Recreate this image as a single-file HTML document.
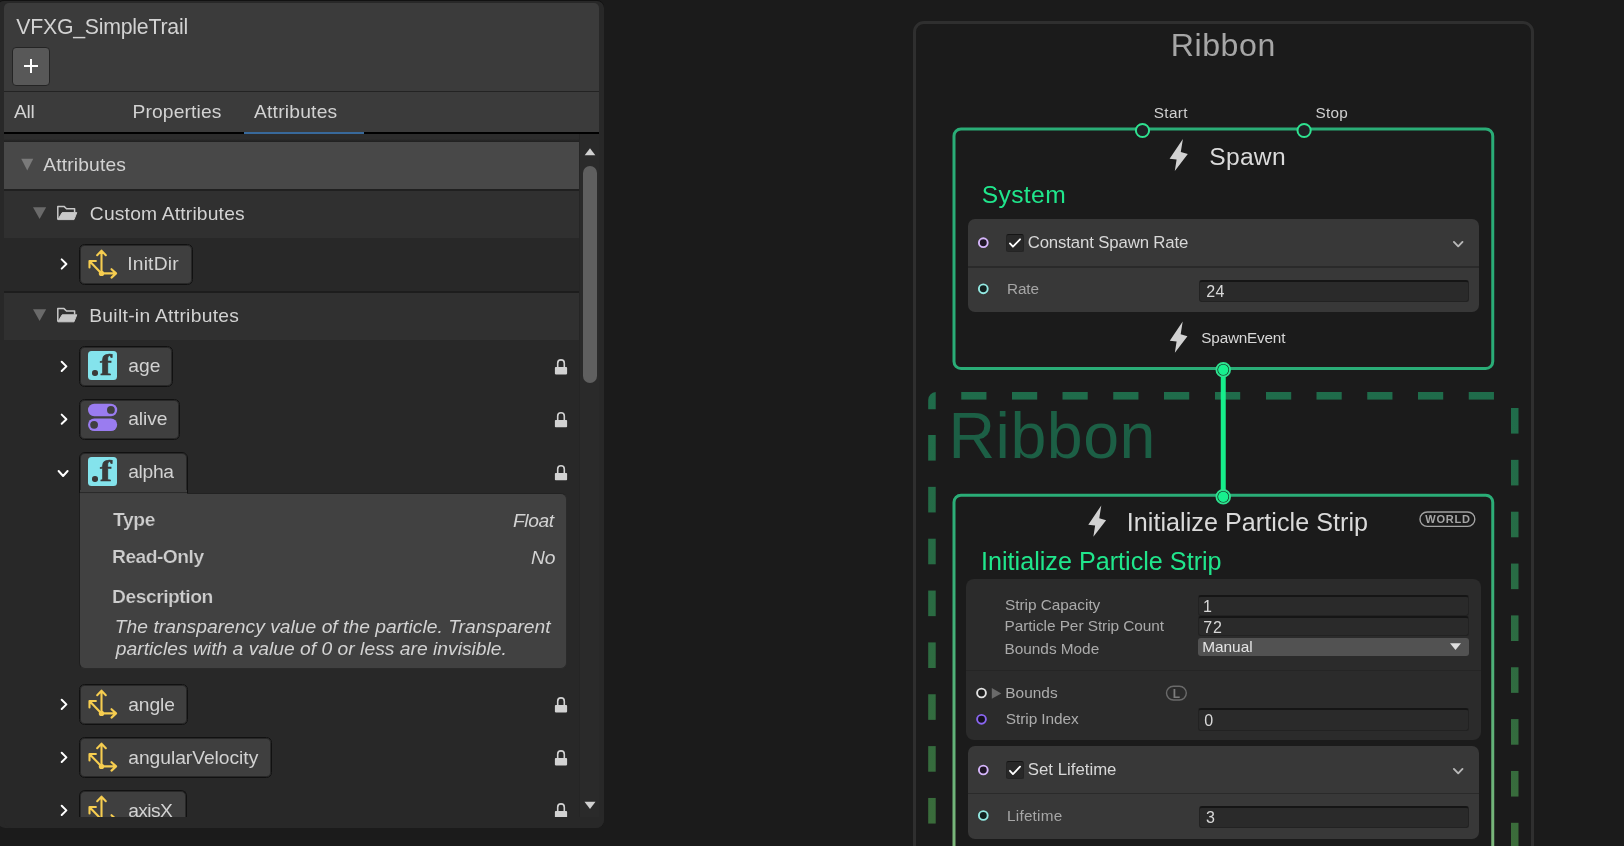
<!DOCTYPE html>
<html lang="en">
<head>
<meta charset="utf-8">
<title>VFXG_SimpleTrail</title>
<style>
html,body{margin:0;padding:0;}
body{width:1624px;height:846px;overflow:hidden;background:#1b1b1b;position:relative;font-family:"Liberation Sans",sans-serif;}
.a{position:absolute;}
.t{position:absolute;white-space:nowrap;font-family:"Liberation Sans",sans-serif;}
.pill{position:absolute;box-sizing:border-box;background:#3f3f3f;border:1px solid #111;box-shadow:inset 0 0 0 1px rgba(17,17,17,0.5);border-radius:5.5px;}
svg{position:absolute;left:0;top:0;overflow:visible;}
.fld{position:absolute;box-sizing:border-box;background:#2a2a2a;border:1px solid #222;border-top:2px solid #151515;border-radius:3px;}
.ficon{position:absolute;will-change:transform;width:29.2px;height:29.2px;background:#84e3ec;border-radius:3.5px;}
.ficon b{position:absolute;left:11.9px;top:-3.7px;font-family:"Liberation Serif",serif;font-weight:bold;font-size:29px;line-height:36px;color:#3a3a3a;-webkit-text-stroke:0.7px #3a3a3a;transform:scaleX(1.22);transform-origin:0 0;}
.ficon i{position:absolute;left:4px;top:19px;width:5.6px;height:5.6px;border-radius:50%;background:#3a3a3a;}
</style>
</head>
<body>
<!-- ================= LEFT PANEL ================= -->
<div class="a" style="left:-3px;top:0;width:607px;height:828px;background:#121212;border-radius:7px 7px 8px 8px;"></div>
<div class="a" style="left:-3px;top:1.2px;width:607px;height:826.8px;background:#282828;border-radius:7px 7px 8px 8px;"></div>
<div class="a" style="left:4px;top:3px;width:595px;height:131px;background:#3b3b3b;border-radius:5px 5px 0 0;"></div>
<div class="a" style="left:4px;top:90.5px;width:595px;height:1.5px;background:#232323;"></div>
<div class="a" style="left:4px;top:131.75px;width:595px;height:2.5px;background:#000;"></div>
<div class="a" style="left:244.25px;top:131.75px;width:119.5px;height:2.5px;background:#38699b;"></div>
<!-- add button -->
<div class="a" style="left:12px;top:46.5px;width:38px;height:39.5px;box-sizing:border-box;background:#585858;border:1.5px solid #242424;border-radius:4px;"></div>
<div class="a" style="left:24px;top:65.25px;width:14px;height:2px;background:#fff;"></div>
<div class="a" style="left:30px;top:59.25px;width:2px;height:14px;background:#fff;"></div>
<!-- list rows -->
<div class="a" style="left:4px;top:134.25px;width:575px;height:7.5px;background:linear-gradient(#2c2c2c 0,#2c2c2c 60%,#202020 100%);"></div>
<div class="a" style="left:4px;top:141.75px;width:575px;height:47px;background:#484848;"></div>
<div class="a" style="left:4px;top:188.75px;width:575px;height:2px;background:#202020;"></div>
<div class="a" style="left:4px;top:190.75px;width:575px;height:47.25px;background:#303030;"></div>
<div class="a" style="left:4px;top:290.75px;width:575px;height:2px;background:#1d1d1d;"></div>
<div class="a" style="left:4px;top:292.75px;width:575px;height:46.75px;background:#303030;"></div>
<!-- scrollbar -->
<div class="a" style="left:579px;top:134.25px;width:20px;height:683px;background:#2a2a2a;border-left:1px solid #252525;box-sizing:border-box;"></div>
<div class="a" style="left:583px;top:165.8px;width:14px;height:217.7px;background:#5f5f5f;border-radius:7px;"></div>
<!-- pills -->
<div class="pill" style="left:79px;top:243.75px;width:113.5px;height:41.25px;"></div>
<div class="pill" style="left:79px;top:345.75px;width:94px;height:41.25px;"></div>
<div class="pill" style="left:79px;top:398.5px;width:101px;height:41.25px;"></div>
<div class="pill" style="left:79px;top:451.75px;width:109px;height:46px;border-radius:6px 6px 0 0;"></div>
<div class="a" style="left:79px;top:492.5px;width:487.5px;height:176px;box-sizing:border-box;background:#414141;border:1px solid #2a2a2a;border-left-color:#1e1e1e;border-top-color:#222;border-radius:0 6px 6px 6px;"></div>
<div class="a" style="left:80.3px;top:490px;width:106.4px;height:4px;background:#3f3f3f;"></div>
<div class="a" style="left:80.3px;top:492.3px;width:106.4px;height:1.2px;background:#2a2a2a;"></div>
<div class="pill" style="left:79px;top:683.75px;width:109px;height:41.25px;"></div>
<div class="pill" style="left:79px;top:736.75px;width:193px;height:41.25px;"></div>
<div class="pill" style="left:79px;top:789.75px;width:108px;height:32px;border-bottom:none;border-radius:6px 6px 0 0;"></div>
<!-- .f icons -->
<div class="ficon" style="left:88px;top:351px;"><i></i><b>f</b></div>
<div class="ficon" style="left:88px;top:457px;"><i></i><b>f</b></div>
<div class="a" style="left:912.8px;top:21px;width:621px;height:860px;box-sizing:border-box;border:3px solid #2f2f2f;border-radius:11px;"></div>
<div class="a" style="left:968.00px;top:218.75px;width:511.25px;height:93.25px;background:#383838;border-radius:7px;"></div>
<div class="a" style="left:968.00px;top:266.25px;width:511.25px;height:1.80px;background:#2a2a2a;"></div>
<div class="a" style="left:1006.25px;top:234px;width:17.5px;height:17.7px;box-sizing:border-box;background:#282828;border:1px solid #242424;border-top:1.3px solid #151515;border-radius:2.5px;"></div>
<div class="fld" style="left:1199.25px;top:279.5px;width:269.25px;height:22px;"></div>
<div class="a" style="left:965.75px;top:578.75px;width:514.75px;height:161.25px;background:#2b2b2b;border-radius:8px;"></div>
<div class="a" style="left:965.75px;top:670.30px;width:514.75px;height:1.20px;background:#252525;"></div>
<div class="fld" style="left:1197.5px;top:595.4px;width:271.25px;height:20.2px;"></div>
<div class="fld" style="left:1197.5px;top:616.2px;width:271.25px;height:20.2px;"></div>
<div class="a" style="left:1198.00px;top:638.20px;width:270.75px;height:17.80px;background:#525252;border-radius:3px;"></div>
<div class="fld" style="left:1197.5px;top:708.25px;width:271.25px;height:23px;"></div>
<div class="a" style="left:967.50px;top:746.25px;width:511.75px;height:92.50px;background:#383838;border-radius:7px;"></div>
<div class="a" style="left:967.50px;top:792.60px;width:511.75px;height:1.80px;background:#2a2a2a;"></div>
<div class="a" style="left:1006.25px;top:761.4px;width:17.5px;height:17.7px;box-sizing:border-box;background:#282828;border:1px solid #242424;border-top:1.3px solid #151515;border-radius:2.5px;"></div>
<div class="fld" style="left:1199.25px;top:806.25px;width:269.25px;height:22px;"></div>
<svg width="1624" height="846" viewBox="0 0 1624 846"><defs><linearGradient id="gi" gradientUnits="userSpaceOnUse" x1="0" y1="494" x2="0" y2="846"><stop offset="0" stop-color="#2aad77"/><stop offset="0.3" stop-color="#3bb078"/><stop offset="0.65" stop-color="#5eb278"/><stop offset="1" stop-color="#7cb67a"/></linearGradient><linearGradient id="gd" gradientUnits="userSpaceOnUse" x1="0" y1="392" x2="0" y2="846"><stop offset="0" stop-color="#1f6c4b"/><stop offset="0.4" stop-color="#286b44"/><stop offset="1" stop-color="#3c6c3a"/></linearGradient></defs><g fill="url(#gd)"><rect x="961.25" y="392" width="25.2" height="7.6"/><rect x="1012.00" y="392" width="25.2" height="7.6"/><rect x="1062.50" y="392" width="25.2" height="7.6"/><rect x="1113.25" y="392" width="25.2" height="7.6"/><rect x="1164.00" y="392" width="25.2" height="7.6"/><rect x="1215.00" y="392" width="25.2" height="7.6"/><rect x="1266.00" y="392" width="25.2" height="7.6"/><rect x="1316.50" y="392" width="25.2" height="7.6"/><rect x="1367.25" y="392" width="25.2" height="7.6"/><rect x="1418.00" y="392" width="25.2" height="7.6"/><rect x="1468.75" y="392" width="25.2" height="7.6"/><path d="M928.2 409.3 V400 A8 8 0 0 1 935.7 392 V409.3 Z"/><rect x="928.2" y="435.00" width="7.5" height="25.6"/><rect x="928.2" y="486.85" width="7.5" height="25.6"/><rect x="928.2" y="538.70" width="7.5" height="25.6"/><rect x="928.2" y="590.55" width="7.5" height="25.6"/><rect x="928.2" y="642.40" width="7.5" height="25.6"/><rect x="928.2" y="694.25" width="7.5" height="25.6"/><rect x="928.2" y="746.10" width="7.5" height="25.6"/><rect x="928.2" y="797.95" width="7.5" height="25.6"/><rect x="1511" y="408.00" width="7.5" height="25.6"/><rect x="1511" y="459.85" width="7.5" height="25.6"/><rect x="1511" y="511.70" width="7.5" height="25.6"/><rect x="1511" y="563.55" width="7.5" height="25.6"/><rect x="1511" y="615.40" width="7.5" height="25.6"/><rect x="1511" y="667.25" width="7.5" height="25.6"/><rect x="1511" y="719.10" width="7.5" height="25.6"/><rect x="1511" y="770.95" width="7.5" height="25.6"/><rect x="1511" y="822.80" width="7.5" height="25.6"/></g><rect x="954" y="129" width="538.75" height="239.5" rx="7" fill="none" stroke="#2aad77" stroke-width="3"/><rect x="954" y="495.25" width="538.75" height="420" rx="7" fill="none" stroke="url(#gi)" stroke-width="3"/><rect x="1220.75" y="369.5" width="5" height="127" fill="#16ee8b"/><circle cx="1142.50" cy="130.5" r="6.6" fill="#1e2024" stroke="#2fe290" stroke-width="2.0"/><circle cx="1304.10" cy="130.5" r="6.6" fill="#1e2024" stroke="#2fe290" stroke-width="2.0"/><circle cx="1223.25" cy="369.75" r="6.8" fill="#14251c" stroke="#2fe290" stroke-width="1.9"/><circle cx="1223.25" cy="369.75" r="5.2" fill="#17f08e"/><circle cx="1223.25" cy="496.75" r="6.8" fill="#14251c" stroke="#2fe290" stroke-width="1.9"/><circle cx="1223.25" cy="496.75" r="5.2" fill="#17f08e"/><polygon points="1182.90,138.90 1169.60,158.70 1176.60,159.50 1174.80,170.90 1187.80,154.00 1180.80,151.90" fill="#d2d2d2"/><polygon points="1182.70,321.60 1169.80,340.81 1176.59,341.58 1174.84,352.64 1187.45,336.25 1180.66,334.21" fill="#d2d2d2"/><polygon points="1101.30,505.40 1088.27,524.80 1095.13,525.59 1093.36,536.76 1106.10,520.20 1099.24,518.14" fill="#d2d2d2"/><circle cx="983.30" cy="242.70" r="4.4" fill="#1f1626" stroke="#d6b6fb" stroke-width="1.9"/><circle cx="983.30" cy="288.80" r="4.4" fill="#12201f" stroke="#93e9e2" stroke-width="1.9"/><circle cx="981.50" cy="693.00" r="4.4" fill="#1c1c1c" stroke="#e2e2e2" stroke-width="1.9"/><circle cx="981.50" cy="719.30" r="4.4" fill="#15121f" stroke="#8a66f2" stroke-width="1.9"/><circle cx="983.30" cy="770.00" r="4.4" fill="#1f1626" stroke="#d6b6fb" stroke-width="1.9"/><circle cx="983.30" cy="815.50" r="4.4" fill="#12201f" stroke="#93e9e2" stroke-width="1.9"/><path d="M1009.95 243.40 L1012.95 246.70 L1020.05 239.30" stroke="#fff" stroke-width="1.8" fill="none" stroke-linecap="round" stroke-linejoin="round"/><path d="M1009.95 770.80 L1012.95 774.10 L1020.05 766.70" stroke="#fff" stroke-width="1.8" fill="none" stroke-linecap="round" stroke-linejoin="round"/><path d="M1453.90 241.90 L1458.20 246.30 L1462.50 241.90" stroke="#b8b8b8" stroke-width="1.9" fill="none" stroke-linecap="round" stroke-linejoin="round"/><path d="M1453.90 768.90 L1458.20 773.30 L1462.50 768.90" stroke="#b8b8b8" stroke-width="1.9" fill="none" stroke-linecap="round" stroke-linejoin="round"/><path d="M1450 643.3 H1461 L1455.5 650 Z" fill="#e0e0e0"/><path d="M991.8 688 V698.8 L1001.3 693.4 Z" fill="#6a6a6a"/><rect x="1166.5" y="686.2" width="19.8" height="13.8" rx="6.9" fill="none" stroke="#6a6a6a" stroke-width="1.4"/><rect x="1420" y="512" width="54.8" height="14.4" rx="7.2" fill="none" stroke="#a2a2a2" stroke-width="1.4"/></svg>
<svg width="610" height="846" viewBox="0 0 610 846"><path d="M21.25 158.75 H33.25 L27.25 170.50 Z" fill="#7a7a7a"/><path d="M33.00 207.20 H46.20 L39.60 219.00 Z" fill="#6a6a6a"/><path d="M33.00 309.20 H46.20 L39.60 321.00 Z" fill="#6a6a6a"/><path d="M57.80 219.40 V206.40 H64.00 L66.50 208.80 H74.60 V212.20" stroke="#c8c8c8" stroke-width="1.5" fill="none" stroke-linejoin="round"/><path d="M62.20 212.60 H76.80 L74.00 219.60 H57.90 Z" fill="#c8c8c8" stroke="#c8c8c8" stroke-width="1" stroke-linejoin="round"/><path d="M57.80 321.60 V308.60 H64.00 L66.50 311.00 H74.60 V314.40" stroke="#c8c8c8" stroke-width="1.5" fill="none" stroke-linejoin="round"/><path d="M62.20 314.80 H76.80 L74.00 321.80 H57.90 Z" fill="#c8c8c8" stroke="#c8c8c8" stroke-width="1" stroke-linejoin="round"/><path d="M61.70 259.40 L66.40 264.00 L61.70 268.60" stroke="#fff" stroke-width="2.0" fill="none" stroke-linecap="round" stroke-linejoin="round"/><path d="M61.70 361.80 L66.40 366.40 L61.70 371.00" stroke="#fff" stroke-width="2.0" fill="none" stroke-linecap="round" stroke-linejoin="round"/><path d="M61.70 414.60 L66.40 419.20 L61.70 423.80" stroke="#fff" stroke-width="2.0" fill="none" stroke-linecap="round" stroke-linejoin="round"/><path d="M61.70 699.80 L66.40 704.40 L61.70 709.00" stroke="#fff" stroke-width="2.0" fill="none" stroke-linecap="round" stroke-linejoin="round"/><path d="M61.70 752.80 L66.40 757.40 L61.70 762.00" stroke="#fff" stroke-width="2.0" fill="none" stroke-linecap="round" stroke-linejoin="round"/><path d="M61.70 805.80 L66.40 810.40 L61.70 815.00" stroke="#fff" stroke-width="2.0" fill="none" stroke-linecap="round" stroke-linejoin="round"/><path d="M58.60 471.00 L63.10 476.00 L67.60 471.00" stroke="#fff" stroke-width="2.0" fill="none" stroke-linecap="round" stroke-linejoin="round"/><g stroke="#f6cd50" stroke-width="2.1" fill="none" stroke-linecap="round" stroke-linejoin="round"><path d="M101.50 273.40 V250.80 M97.20 255.20 L101.50 250.60 L105.80 255.20"/><path d="M101.50 273.40 H115.90 M111.50 269.20 L116.10 273.40 L111.50 277.60"/><path d="M101.50 273.40 L89.70 261.20 M89.50 261.00 H95.90 M89.50 261.00 V267.40"/></g><circle cx="101.50" cy="273.40" r="2.7" fill="#f6cd50"/><g stroke="#f6cd50" stroke-width="2.1" fill="none" stroke-linecap="round" stroke-linejoin="round"><path d="M101.50 713.40 V690.80 M97.20 695.20 L101.50 690.60 L105.80 695.20"/><path d="M101.50 713.40 H115.90 M111.50 709.20 L116.10 713.40 L111.50 717.60"/><path d="M101.50 713.40 L89.70 701.20 M89.50 701.00 H95.90 M89.50 701.00 V707.40"/></g><circle cx="101.50" cy="713.40" r="2.7" fill="#f6cd50"/><g stroke="#f6cd50" stroke-width="2.1" fill="none" stroke-linecap="round" stroke-linejoin="round"><path d="M101.50 766.40 V743.80 M97.20 748.20 L101.50 743.60 L105.80 748.20"/><path d="M101.50 766.40 H115.90 M111.50 762.20 L116.10 766.40 L111.50 770.60"/><path d="M101.50 766.40 L89.70 754.20 M89.50 754.00 H95.90 M89.50 754.00 V760.40"/></g><circle cx="101.50" cy="766.40" r="2.7" fill="#f6cd50"/><g stroke="#f6cd50" stroke-width="2.1" fill="none" stroke-linecap="round" stroke-linejoin="round"><path d="M101.50 819.40 V796.80 M97.20 801.20 L101.50 796.60 L105.80 801.20"/><path d="M101.50 819.40 H115.90 M111.50 815.20 L116.10 819.40 L111.50 823.60"/><path d="M101.50 819.40 L89.70 807.20 M89.50 807.00 H95.90 M89.50 807.00 V813.40"/></g><circle cx="101.50" cy="819.40" r="2.7" fill="#f6cd50"/><rect x="88.00" y="403.80" width="29.2" height="12.4" rx="6.2" fill="#9a7cf0"/><circle cx="110.90" cy="409.90" r="3.9" fill="#3f3f3f"/><rect x="88.00" y="418.40" width="29.2" height="12.6" rx="6.3" fill="#9a7cf0"/><circle cx="94.10" cy="424.80" r="3.9" fill="#3f3f3f"/><rect x="554.90" y="367.10" width="12.2" height="7.3" rx="0.8" fill="#d2d2d2"/><path d="M557.70 367.60 V363.20 A3.3 3.3 0 0 1 564.30 363.20 V367.60" stroke="#d2d2d2" stroke-width="1.6" fill="none"/><rect x="554.90" y="419.90" width="12.2" height="7.3" rx="0.8" fill="#d2d2d2"/><path d="M557.70 420.40 V416.00 A3.3 3.3 0 0 1 564.30 416.00 V420.40" stroke="#d2d2d2" stroke-width="1.6" fill="none"/><rect x="554.90" y="473.00" width="12.2" height="7.3" rx="0.8" fill="#d2d2d2"/><path d="M557.70 473.50 V469.10 A3.3 3.3 0 0 1 564.30 469.10 V473.50" stroke="#d2d2d2" stroke-width="1.6" fill="none"/><rect x="554.90" y="705.10" width="12.2" height="7.3" rx="0.8" fill="#d2d2d2"/><path d="M557.70 705.60 V701.20 A3.3 3.3 0 0 1 564.30 701.20 V705.60" stroke="#d2d2d2" stroke-width="1.6" fill="none"/><rect x="554.90" y="758.10" width="12.2" height="7.3" rx="0.8" fill="#d2d2d2"/><path d="M557.70 758.60 V754.20 A3.3 3.3 0 0 1 564.30 754.20 V758.60" stroke="#d2d2d2" stroke-width="1.6" fill="none"/><rect x="554.90" y="811.10" width="12.2" height="7.3" rx="0.8" fill="#d2d2d2"/><path d="M557.70 811.60 V807.20 A3.3 3.3 0 0 1 564.30 807.20 V811.60" stroke="#d2d2d2" stroke-width="1.6" fill="none"/><path d="M584.7 155.3 H595.3 L590 148.2 Z" fill="#d0d0d0"/></svg>
<div class="a" id="txt" style="left:0;top:0;width:1624px;height:846px;will-change:transform;">
<span class="t" style="left:16.21px;top:13.00px;font-size:21.29px;line-height:28px;letter-spacing:-0.233px;color:#d2d2d2;">VFXG_SimpleTrail</span>
<span class="t" style="left:14.01px;top:99.00px;font-size:19.26px;line-height:25px;letter-spacing:-0.289px;color:#d2d2d2;">All</span>
<span class="t" style="left:132.47px;top:99.00px;font-size:19.26px;line-height:25px;letter-spacing:0.138px;color:#d2d2d2;">Properties</span>
<span class="t" style="left:254.01px;top:99.00px;font-size:19.26px;line-height:25px;letter-spacing:0.209px;color:#d2d2d2;">Attributes</span>
<span class="t" style="left:43.26px;top:152.00px;font-size:19.26px;line-height:25px;letter-spacing:0.153px;color:#d2d2d2;">Attributes</span>
<span class="t" style="left:89.82px;top:201.00px;font-size:19.26px;line-height:25px;letter-spacing:0.183px;color:#d2d2d2;">Custom Attributes</span>
<span class="t" style="left:127.27px;top:251.00px;font-size:19.26px;line-height:25px;letter-spacing:0.175px;color:#d2d2d2;">InitDir</span>
<span class="t" style="left:89.22px;top:303.00px;font-size:19.26px;line-height:25px;letter-spacing:0.292px;color:#d2d2d2;">Built-in Attributes</span>
<span class="t" style="left:128.23px;top:353.00px;font-size:19.26px;line-height:25px;letter-spacing:0.020px;color:#d2d2d2;">age</span>
<span class="t" style="left:128.23px;top:406.00px;font-size:19.26px;line-height:25px;letter-spacing:-0.109px;color:#d2d2d2;">alive</span>
<span class="t" style="left:128.23px;top:459.00px;font-size:19.26px;line-height:25px;letter-spacing:-0.327px;color:#d2d2d2;">alpha</span>
<span class="t" style="left:113.08px;top:507.00px;font-size:19.26px;line-height:25px;letter-spacing:-0.383px;color:#cdcdcd;font-weight:bold;-webkit-text-stroke:0.22px #414141;">Type</span>
<span class="t" style="left:512.96px;top:508.00px;font-size:19.26px;line-height:25px;letter-spacing:-0.411px;color:#d2d2d2;font-style:italic;">Float</span>
<span class="t" style="left:112.01px;top:544.00px;font-size:19.26px;line-height:25px;letter-spacing:-0.522px;color:#cdcdcd;font-weight:bold;-webkit-text-stroke:0.22px #414141;">Read-Only</span>
<span class="t" style="left:530.96px;top:545.00px;font-size:19.26px;line-height:25px;letter-spacing:-0.167px;color:#d2d2d2;font-style:italic;">No</span>
<span class="t" style="left:112.01px;top:584.00px;font-size:19.26px;line-height:25px;letter-spacing:-0.472px;color:#cdcdcd;font-weight:bold;-webkit-text-stroke:0.22px #414141;">Description</span>
<span class="t" style="left:114.82px;top:614.00px;font-size:19.26px;line-height:25px;letter-spacing:0.014px;color:#d2d2d2;font-style:italic;">The transparency value of the particle. Transparent</span>
<span class="t" style="left:115.78px;top:636.00px;font-size:19.26px;line-height:25px;letter-spacing:0.013px;color:#d2d2d2;font-style:italic;">particles with a value of 0 or less are invisible.</span>
<span class="t" style="left:128.23px;top:692.00px;font-size:19.26px;line-height:25px;letter-spacing:-0.113px;color:#d2d2d2;">angle</span>
<span class="t" style="left:128.23px;top:745.00px;font-size:19.26px;line-height:25px;letter-spacing:-0.037px;color:#d2d2d2;">angularVelocity</span>
<span class="t" style="left:128.23px;top:798.00px;font-size:19.26px;line-height:25px;letter-spacing:-0.606px;color:#d2d2d2;">axisX</span>
<span class="t" style="left:1170.67px;top:24.00px;font-size:32.10px;line-height:42px;letter-spacing:0.599px;color:#a6a6a6;">Ribbon</span>
<span class="t" style="left:1153.86px;top:103.00px;font-size:15.30px;line-height:20px;letter-spacing:0.311px;color:#d0d0d0;">Start</span>
<span class="t" style="left:1315.61px;top:103.00px;font-size:15.30px;line-height:20px;letter-spacing:0.204px;color:#d0d0d0;">Stop</span>
<span class="t" style="left:1209.18px;top:141.00px;font-size:24.61px;line-height:32px;letter-spacing:0.304px;color:#dadada;">Spawn</span>
<span class="t" style="left:981.68px;top:179.00px;font-size:24.61px;line-height:32px;letter-spacing:0.388px;color:#20e68c;">System</span>
<span class="t" style="left:1027.70px;top:232.00px;font-size:16.80px;line-height:22px;letter-spacing:-0.143px;color:#d8d8d8;">Constant Spawn Rate</span>
<span class="t" style="left:1007.04px;top:279.00px;font-size:15.30px;line-height:20px;letter-spacing:-0.128px;color:#a6a6a6;">Rate</span>
<span class="t" style="left:1206.24px;top:281.00px;font-size:16.05px;line-height:21px;letter-spacing:0.425px;color:#d8d8d8;">24</span>
<span class="t" style="left:1201.36px;top:328.00px;font-size:15.30px;line-height:20px;letter-spacing:-0.206px;color:#d8d8d8;">SpawnEvent</span>
<span class="t" style="left:948.51px;top:394.00px;font-size:64.52px;line-height:84px;letter-spacing:0.504px;color:#1c5f45;">Ribbon</span>
<span class="t" style="left:1126.73px;top:506.00px;font-size:25.15px;line-height:33px;letter-spacing:0.042px;color:#dadada;">Initialize Particle Strip</span>
<span class="t" style="left:1425.29px;top:512.00px;font-size:11.02px;line-height:14px;letter-spacing:0.775px;color:#a6a6a6;font-weight:bold;">WORLD</span>
<span class="t" style="left:980.98px;top:545.00px;font-size:25.15px;line-height:33px;letter-spacing:0.013px;color:#20e68c;">Initialize Particle Strip</span>
<span class="t" style="left:1005.10px;top:595.00px;font-size:15.41px;line-height:20px;letter-spacing:-0.052px;color:#aaaaaa;">Strip Capacity</span>
<span class="t" style="left:1004.54px;top:616.00px;font-size:15.41px;line-height:20px;letter-spacing:-0.059px;color:#aaaaaa;">Particle Per Strip Count</span>
<span class="t" style="left:1004.54px;top:639.00px;font-size:15.41px;line-height:20px;letter-spacing:-0.038px;color:#aaaaaa;">Bounds Mode</span>
<span class="t" style="left:1202.98px;top:596.00px;font-size:16.05px;line-height:21px;letter-spacing:0.300px;color:#d8d8d8;">1</span>
<span class="t" style="left:1203.23px;top:617.00px;font-size:16.05px;line-height:21px;letter-spacing:0.927px;color:#d8d8d8;">72</span>
<span class="t" style="left:1202.29px;top:637.00px;font-size:15.41px;line-height:20px;letter-spacing:-0.048px;color:#e4e4e4;">Manual</span>
<span class="t" style="left:1005.29px;top:683.00px;font-size:15.41px;line-height:20px;letter-spacing:0.013px;color:#acacac;">Bounds</span>
<span class="t" style="left:1172.80px;top:686.00px;font-size:11.98px;line-height:16px;letter-spacing:0.300px;color:#7c7c7c;font-weight:bold;">L</span>
<span class="t" style="left:1005.85px;top:709.00px;font-size:15.41px;line-height:20px;letter-spacing:-0.079px;color:#acacac;">Strip Index</span>
<span class="t" style="left:1204.17px;top:710.00px;font-size:16.05px;line-height:21px;letter-spacing:0.300px;color:#d8d8d8;">0</span>
<span class="t" style="left:1027.79px;top:759.00px;font-size:16.80px;line-height:22px;letter-spacing:0.005px;color:#d8d8d8;">Set Lifetime</span>
<span class="t" style="left:1007.04px;top:806.00px;font-size:15.30px;line-height:20px;letter-spacing:0.230px;color:#a6a6a6;">Lifetime</span>
<span class="t" style="left:1205.94px;top:807.00px;font-size:16.05px;line-height:21px;letter-spacing:0.300px;color:#d8d8d8;">3</span>
</div>
<!-- bottom clip cover -->
<div class="a" style="left:4px;top:816.75px;width:600px;height:11.25px;background:#282828;border-radius:0 0 8px 8px;"></div>

<svg width="610" height="846" viewBox="0 0 610 846"><path d="M584.5 801.8 H595.5 L590 809 Z" fill="#d0d0d0"/></svg>
</body>
</html>
